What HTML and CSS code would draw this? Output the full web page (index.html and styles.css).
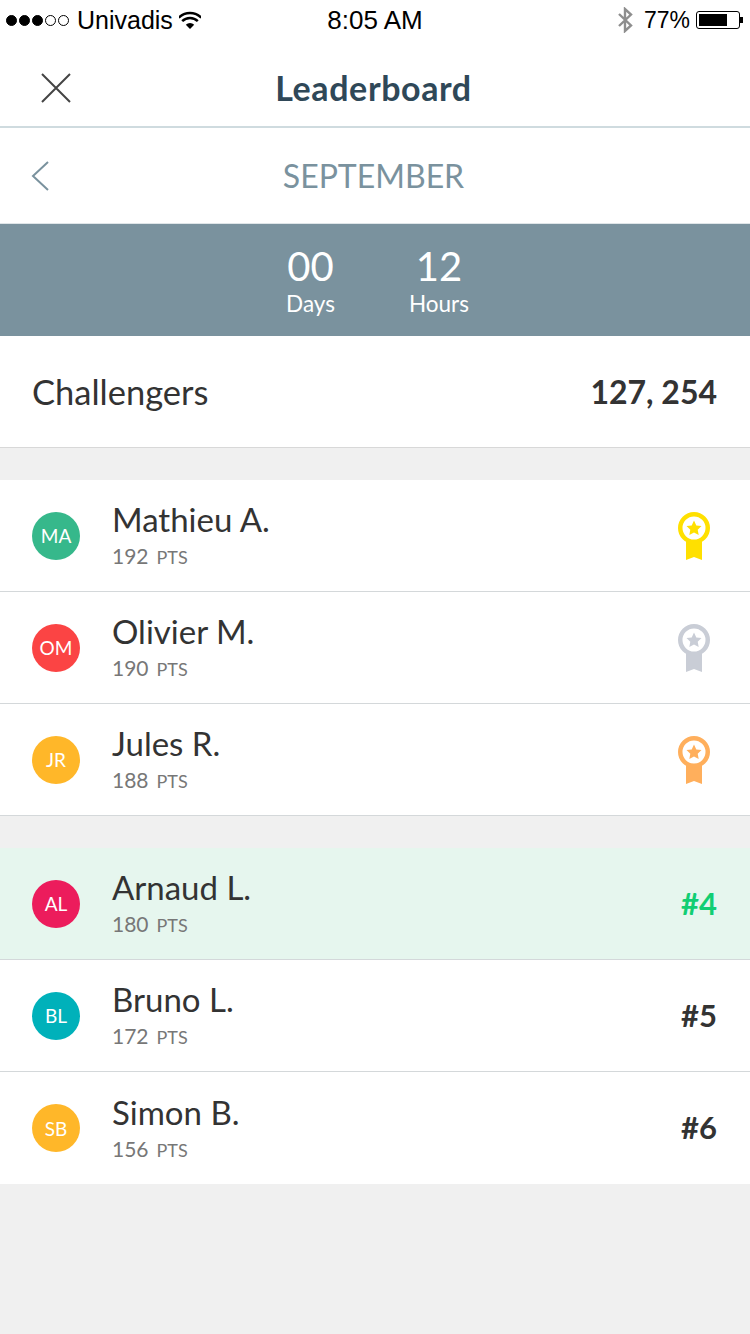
FILE: index.html
```html
<!DOCTYPE html>
<html lang="en">
<head>
  <meta charset="UTF-8">
  <meta name="viewport" content="width=device-width, initial-scale=1.0">
  <title>Leaderboard</title>
  <link rel="stylesheet" href="styles.css">
</head>
<body>
  <div class="status-bar">
    <div class="status-left">
      <span class="signal"><i class="on"></i><i class="on"></i><i class="on"></i><i></i><i></i></span>
      <span>Univadis</span>
      <svg class="wifi" width="22" height="18" viewBox="0 0 22 18">
        <path d="M11 18 L6.8 13.8 A6 6 0 0 1 15.2 13.8 Z" fill="#000"/>
        <path d="M3.2 10.2 A11 11 0 0 1 18.8 10.2" fill="none" stroke="#000" stroke-width="2.5"/>
        <path d="M-0.3 6.7 A16 16 0 0 1 22.3 6.7" fill="none" stroke="#000" stroke-width="2.5"/>
      </svg>
    </div>
    <div class="status-time">8:05 AM</div>
    <div class="status-right">
      <svg class="bt" width="18" height="26" viewBox="0 0 18 26">
        <path d="M3 7 L15 18.5 L9 24 L9 2 L15 7.5 L3 19" fill="none" stroke="#8e8e8e" stroke-width="2.4"/>
      </svg>
      <span>77%</span>
      <div class="battery"><div class="battery-level"></div></div>
      <div class="battery-tip"></div>
    </div>
  </div>

  <div class="nav">
    <svg class="close" width="30" height="30" viewBox="0 0 30 30">
      <path d="M1 1 L29 29 M29 1 L1 29" stroke="#444" stroke-width="2" fill="none"/>
    </svg>
    <h1>Leaderboard</h1>
  </div>

  <div class="month">
    <svg class="back" width="18" height="30" viewBox="0 0 18 30">
      <path d="M17 1 L2 15 L17 29" stroke="#7a929e" stroke-width="2" fill="none"/>
    </svg>
    <span>SEPTEMBER</span>
  </div>

  <div class="countdown">
    <div class="count-item"><div class="count-num">00</div><div class="count-label">Days</div></div>
    <div class="count-item"><div class="count-num">12</div><div class="count-label">Hours</div></div>
  </div>

  <div class="challengers">
    <span>Challengers</span>
    <b>127, 254</b>
  </div>

  <div class="list">
    <div class="row">
      <div class="avatar green">MA</div>
      <div class="who"><div class="name">Mathieu A.</div><div class="pts">192<small>PTS</small></div></div>
      <svg class="medal" width="32" height="48" viewBox="0 0 32 48" color="#ffe000"><use href="#medal"/></svg>
    </div>
    <div class="row">
      <div class="avatar red">OM</div>
      <div class="who"><div class="name">Olivier M.</div><div class="pts">190<small>PTS</small></div></div>
      <svg class="medal" width="32" height="48" viewBox="0 0 32 48" color="#c9cdd6"><use href="#medal"/></svg>
    </div>
    <div class="row">
      <div class="avatar amber">JR</div>
      <div class="who"><div class="name">Jules R.</div><div class="pts">188<small>PTS</small></div></div>
      <svg class="medal" width="32" height="48" viewBox="0 0 32 48" color="#ffaf5c"><use href="#medal"/></svg>
    </div>
  </div>

  <div class="list">
    <div class="row me">
      <div class="avatar pink">AL</div>
      <div class="who"><div class="name">Arnaud L.</div><div class="pts">180<small>PTS</small></div></div>
      <div class="rank">#4</div>
    </div>
    <div class="row">
      <div class="avatar teal">BL</div>
      <div class="who"><div class="name">Bruno L.</div><div class="pts">172<small>PTS</small></div></div>
      <div class="rank">#5</div>
    </div>
    <div class="row last">
      <div class="avatar amber">SB</div>
      <div class="who"><div class="name">Simon B.</div><div class="pts">156<small>PTS</small></div></div>
      <div class="rank">#6</div>
    </div>
  </div>

  <svg width="0" height="0" class="defs">
    <symbol id="medal" viewBox="0 0 32 48">
      <path d="M8 26 H24 V48 L16 45 L8 48 Z" fill="currentColor"/>
      <circle cx="16" cy="16" r="13.75" fill="#fff" stroke="currentColor" stroke-width="4.5"/>
      <path d="M16 8.5 L18.3 13.5 L23.5 14.1 L19.7 17.8 L20.7 23 L16 20.4 L11.3 23 L12.3 17.8 L8.5 14.1 L13.7 13.5 Z" fill="currentColor"/>
    </symbol>
  </svg>
</body>
</html>
```

FILE: styles.css
```css
body {
  font-family: 'Lato', sans-serif;
  background: #f0f0f0;
  margin: 0;
  padding: 0;
  color: #333;
}
.status-bar {
  height: 40px;
  background: #fff;
  display: flex;
  align-items: center;
  justify-content: space-between;
  padding: 0 7px 0 6px;
  font-family: 'Liberation Sans', sans-serif;
  font-size: 25px;
  color: #000;
  position: relative;
}
.status-left, .status-right {
  display: flex;
  align-items: center;
}
.status-right {
  font-size: 23px;
}
.signal {
  display: flex;
  gap: 2px;
  margin-right: 8px;
}
.signal i {
  width: 11px;
  height: 11px;
  border-radius: 50%;
  border: 1px solid #000;
  box-sizing: border-box;
}
.signal i.on {
  background: #000;
}
.wifi {
  margin-left: 6px;
}
.status-time {
  position: absolute;
  left: 0;
  right: 0;
  text-align: center;
  font-size: 26px;
}
.bt {
  margin-right: 10px;
}
.battery {
  width: 44px;
  height: 18px;
  border: 1px solid #000;
  border-radius: 3px;
  padding: 2px;
  box-sizing: border-box;
  margin-left: 6px;
}
.battery-level {
  width: 28px;
  height: 100%;
  background: #000;
}
.battery-tip {
  width: 3px;
  height: 6px;
  background: #000;
}
.nav {
  height: 86px;
  background: #fff;
  border-bottom: 2px solid #cfdbdf;
  display: flex;
  align-items: center;
  justify-content: center;
  padding-right: 3px;
  position: relative;
}
.nav h1 {
  margin: 8px 0 0;
  font-size: 34px;
  letter-spacing: 0.6px;
  font-weight: 700;
  color: #2f4858;
}
.close {
  position: absolute;
  left: 41px;
  top: 33px;
}
.month {
  height: 95px;
  background: #fff;
  border-bottom: 1px solid #dfe5e8;
  display: flex;
  align-items: center;
  justify-content: center;
  padding-right: 3px;
  font-size: 32px;
  color: #7a929e;
  position: relative;
}
.back {
  position: absolute;
  left: 31px;
  top: 33px;
}
.countdown {
  height: 112px;
  background: #7a929e;
  color: #fff;
  display: flex;
  justify-content: center;
  gap: 74px;
  padding-left: 5px;
  text-align: center;
}
.count-num {
  font-size: 40px;
  line-height: 50px;
  margin-top: 17px;
}
.count-label {
  font-size: 22.5px;
  line-height: 26px;
}
.challengers {
  height: 111px;
  background: #fff;
  border-bottom: 1px solid #d8d8d8;
  display: flex;
  align-items: center;
  justify-content: space-between;
  padding: 0 33px 0 32px;
  font-size: 34.5px;
}
.challengers b {
  font-size: 32px;
  font-weight: 700;
}
.list {
  margin-top: 32px;
}
.row {
  height: 111px;
  background: #fff;
  border-bottom: 1px solid #d4d8da;
  display: flex;
  align-items: center;
  padding: 0 33px 0 32px;
}
.row.last {
  border-bottom: none;
  height: 112px;
}
.row.me {
  background: #e6f6ee;
}
.avatar {
  width: 48px;
  height: 48px;
  border-radius: 50%;
  color: #fff;
  font-size: 19px;
  display: flex;
  align-items: center;
  justify-content: center;
  margin-right: 33px;
  flex-shrink: 0;
}
.green { background: #36b88b; }
.red { background: #fb4444; }
.amber { background: #ffb729; }
.pink { background: #ec1c5c; }
.teal { background: #00b1ba; }
.who {
  flex: 1;
  margin-left: -1px;
  padding-bottom: 1px;
}
.name {
  font-size: 33px;
  line-height: 40px;
}
.pts {
  font-size: 21px;
  line-height: 28px;
  margin-top: 3px;
  color: #777;
}
.pts small {
  font-size: 18px;
  margin-left: 8px;
}
.rank {
  font-size: 31px;
  font-weight: 700;
  padding-bottom: 2px;
}
.me .rank {
  color: #12ce73;
}
.medal {
  margin-right: 7px;
}
.defs {
  position: absolute;
}
```
